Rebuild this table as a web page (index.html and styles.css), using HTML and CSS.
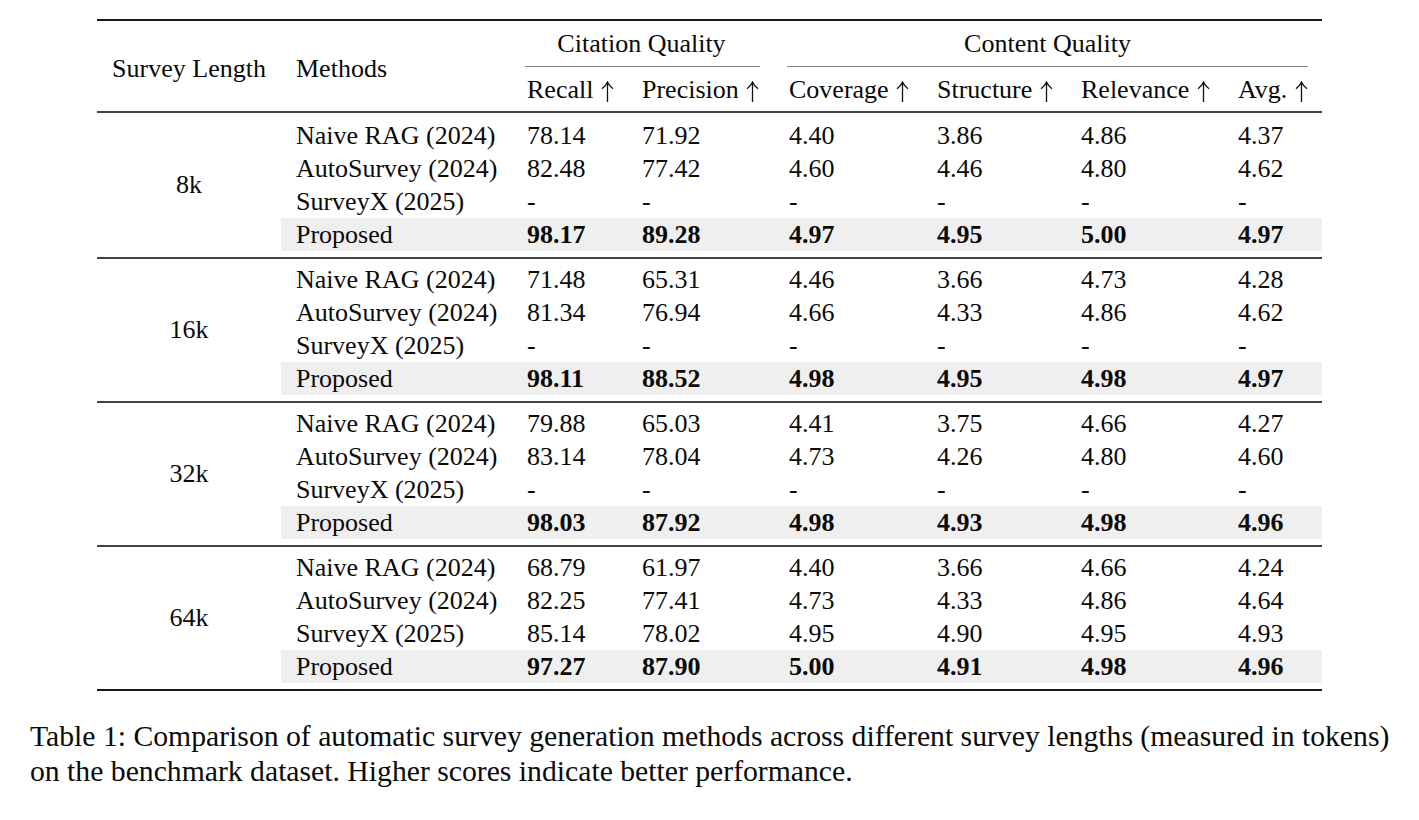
FILE: index.html
```html
<!DOCTYPE html>
<html>
<head>
<meta charset="utf-8">
<link rel="stylesheet" href="styles.css">
</head>
<body>
<div class="page">
  <div class="tbl">
    <div class="thead">
      <div class="h-len">Survey Length</div>
      <div class="h-meth">Methods</div>
      <div class="h-group h-cit">
        <div class="h-top">Citation Quality</div>
        <div class="h-sub">
          <div class="c3">Recall <svg class="arr" viewBox="0 0 13 21" aria-label="higher is better"><path d="M6.5 1.5V21M1 7.8Q4.6 5.2 6.5 1Q8.4 5.2 12 7.8"/></svg></div>
          <div class="c4">Precision <svg class="arr" viewBox="0 0 13 21" aria-label="higher is better"><path d="M6.5 1.5V21M1 7.8Q4.6 5.2 6.5 1Q8.4 5.2 12 7.8"/></svg></div>
        </div>
      </div>
      <div class="h-group h-con">
        <div class="h-top">Content Quality</div>
        <div class="h-sub">
          <div class="c5">Coverage <svg class="arr" viewBox="0 0 13 21" aria-label="higher is better"><path d="M6.5 1.5V21M1 7.8Q4.6 5.2 6.5 1Q8.4 5.2 12 7.8"/></svg></div>
          <div class="c6">Structure <svg class="arr" viewBox="0 0 13 21" aria-label="higher is better"><path d="M6.5 1.5V21M1 7.8Q4.6 5.2 6.5 1Q8.4 5.2 12 7.8"/></svg></div>
          <div class="c7">Relevance <svg class="arr" viewBox="0 0 13 21" aria-label="higher is better"><path d="M6.5 1.5V21M1 7.8Q4.6 5.2 6.5 1Q8.4 5.2 12 7.8"/></svg></div>
          <div class="c8">Avg. <svg class="arr" viewBox="0 0 13 21" aria-label="higher is better"><path d="M6.5 1.5V21M1 7.8Q4.6 5.2 6.5 1Q8.4 5.2 12 7.8"/></svg></div>
        </div>
      </div>
    </div>

    <div class="group first">
      <div class="len">8k</div>
      <div class="rows">
        <div class="row"><div>Naive RAG (2024)</div><div>78.14</div><div>71.92</div><div>4.40</div><div>3.86</div><div>4.86</div><div>4.37</div></div>
        <div class="row"><div>AutoSurvey (2024)</div><div>82.48</div><div>77.42</div><div>4.60</div><div>4.46</div><div>4.80</div><div>4.62</div></div>
        <div class="row"><div>SurveyX (2025)</div><div>-</div><div>-</div><div>-</div><div>-</div><div>-</div><div>-</div></div>
        <div class="row best"><div>Proposed</div><div>98.17</div><div>89.28</div><div>4.97</div><div>4.95</div><div>5.00</div><div>4.97</div></div>
      </div>
    </div>

    <div class="group">
      <div class="len">16k</div>
      <div class="rows">
        <div class="row"><div>Naive RAG (2024)</div><div>71.48</div><div>65.31</div><div>4.46</div><div>3.66</div><div>4.73</div><div>4.28</div></div>
        <div class="row"><div>AutoSurvey (2024)</div><div>81.34</div><div>76.94</div><div>4.66</div><div>4.33</div><div>4.86</div><div>4.62</div></div>
        <div class="row"><div>SurveyX (2025)</div><div>-</div><div>-</div><div>-</div><div>-</div><div>-</div><div>-</div></div>
        <div class="row best"><div>Proposed</div><div>98.11</div><div>88.52</div><div>4.98</div><div>4.95</div><div>4.98</div><div>4.97</div></div>
      </div>
    </div>

    <div class="group">
      <div class="len">32k</div>
      <div class="rows">
        <div class="row"><div>Naive RAG (2024)</div><div>79.88</div><div>65.03</div><div>4.41</div><div>3.75</div><div>4.66</div><div>4.27</div></div>
        <div class="row"><div>AutoSurvey (2024)</div><div>83.14</div><div>78.04</div><div>4.73</div><div>4.26</div><div>4.80</div><div>4.60</div></div>
        <div class="row"><div>SurveyX (2025)</div><div>-</div><div>-</div><div>-</div><div>-</div><div>-</div><div>-</div></div>
        <div class="row best"><div>Proposed</div><div>98.03</div><div>87.92</div><div>4.98</div><div>4.93</div><div>4.98</div><div>4.96</div></div>
      </div>
    </div>

    <div class="group last">
      <div class="len">64k</div>
      <div class="rows">
        <div class="row"><div>Naive RAG (2024)</div><div>68.79</div><div>61.97</div><div>4.40</div><div>3.66</div><div>4.66</div><div>4.24</div></div>
        <div class="row"><div>AutoSurvey (2024)</div><div>82.25</div><div>77.41</div><div>4.73</div><div>4.33</div><div>4.86</div><div>4.64</div></div>
        <div class="row"><div>SurveyX (2025)</div><div>85.14</div><div>78.02</div><div>4.95</div><div>4.90</div><div>4.95</div><div>4.93</div></div>
        <div class="row best"><div>Proposed</div><div>97.27</div><div>87.90</div><div>5.00</div><div>4.91</div><div>4.98</div><div>4.96</div></div>
      </div>
    </div>
  </div>

  <p class="caption">Table 1: Comparison of automatic survey generation methods across different survey lengths (measured in tokens) on the benchmark dataset. Higher scores indicate better performance.</p>
</div>
</body>
</html>
```

FILE: styles.css
```css
html, body {
  margin: 0;
  padding: 0;
  background: #ffffff;
}

body {
  font-family: "Liberation Serif", "Times New Roman", serif;
  font-size: 26px;
  color: #0a0a0a;
}

.page {
  padding-top: 19px;
}

.tbl {
  width: 1225px;
  margin-left: 97px;
  border-top: 2px solid #1a1a1a;
  border-bottom: 2px solid #1a1a1a;
}

.thead {
  display: flex;
  height: 90px;
  border-bottom: 2px solid #444444;
}

.h-len {
  width: 184px;
  text-align: center;
  line-height: 96px;
}

.h-meth {
  width: 216px;
  padding-left: 15px;
  line-height: 96px;
}

.h-group {
  display: flex;
  flex-direction: column;
}

.h-cit { width: 262px; }
.h-con { width: 548px; }

.h-top {
  height: 45px;
  line-height: 46px;
  text-align: center;
  margin: 0 14px 0 13px;
  border-bottom: 1px solid #8a8a8a;
}

.h-cit .h-top { padding-right: 2px; }

.h-sub {
  display: flex;
  height: 44px;
  line-height: 46px;
  white-space: nowrap;
}

.arr {
  width: 13px;
  height: 21px;
  margin-left: 1px;
  vertical-align: -4px;
  fill: none;
  stroke: #111111;
  stroke-width: 1.3;
}

.c3 { width: 100px; padding-left: 15px; }
.c4 { width: 132px; padding-left: 15px; }
.c5 { width: 133px; padding-left: 15px; }
.c6 { width: 129px; padding-left: 15px; }
.c7 { width: 142px; padding-left: 15px; }
.c8 { width: 84px; padding-left: 15px; }

.group {
  display: flex;
  border-bottom: 2px solid #444444;
}

.group.last {
  border-bottom: none;
}

.len {
  width: 184px;
  display: flex;
  align-items: center;
  justify-content: center;
}

.rows {
  width: 1041px;
  padding: 4px 0 6px;
}

.group.first .rows {
  padding-top: 6px;
}

.row {
  display: grid;
  grid-template-columns: 231px 115px 147px 148px 144px 157px 99px;
  height: 33px;
  line-height: 33px;
}

.row > div {
  padding-left: 15px;
  white-space: nowrap;
}

.row.best {
  background: #efefef;
}

.row.best > div + div {
  font-weight: bold;
}

.caption {
  margin: 28px 0 0 30px;
  width: 1375px;
  font-size: 29.7px;
  line-height: 35px;
}
```
